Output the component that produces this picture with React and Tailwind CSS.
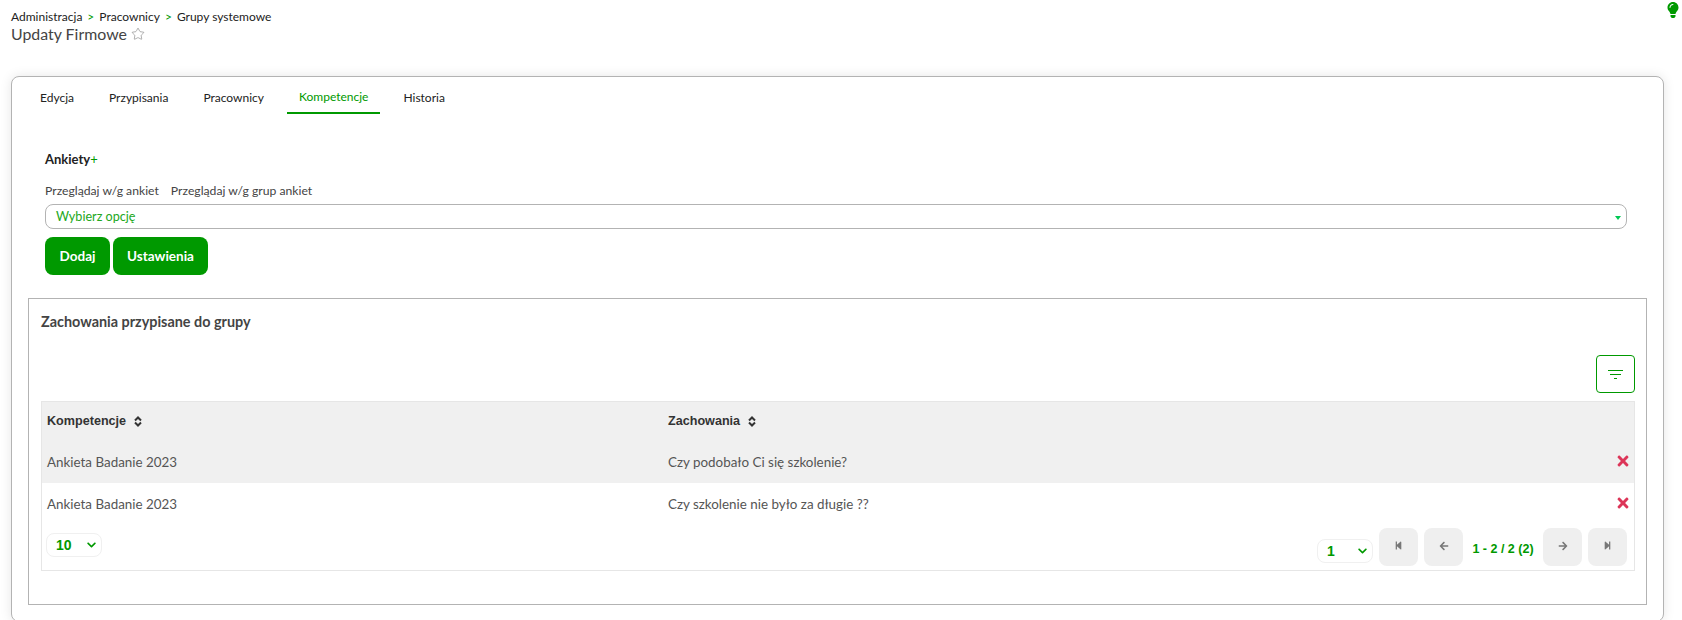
import { Star } from "lucide-react";
import {
  FaLightbulb,
  FaTimes,
  FaStepBackward,
  FaStepForward,
  FaArrowLeft,
  FaArrowRight,
  FaChevronDown,
} from "react-icons/fa";

const TABS = ["Edycja", "Przypisania", "Pracownicy", "Kompetencje", "Historia"];

const ROWS = [
  { name: "Ankieta Badanie 2023", question: "Czy podobało Ci się szkolenie?", shaded: true },
  { name: "Ankieta Badanie 2023", question: "Czy szkolenie nie było za długie ??", shaded: false },
];

function SortIcon() {
  return (
    <svg viewBox="0 0 8 11" className="ml-2 h-[11px] w-2 text-[#333]" fill="none" stroke="currentColor" strokeWidth="2">
      <path d="M1 4.5 L4 1.5 L7 4.5" />
      <path d="M1 6.5 L4 9.5 L7 6.5" />
    </svg>
  );
}

function FilterIcon() {
  return (
    <svg viewBox="0 0 15 9" className="h-[9px] w-[15px]" stroke="currentColor" strokeWidth="1">
      <path d="M0 0.5 H15" />
      <path d="M2 4.5 H13" />
      <path d="M6 8.5 H9" />
    </svg>
  );
}

function PageButton({ children }) {
  return (
    <button className="flex h-[38px] w-[39px] items-start justify-center rounded-lg bg-[#efefef] pt-[13px] text-[#777]">
      {children}
    </button>
  );
}

function SmallSelect({ value }) {
  return (
    <div className="flex h-6 w-[56px] items-center justify-between rounded-lg border border-[#f0f0f0] bg-white pl-[9px] pr-[4px] font-['Liberation_Sans',sans-serif] text-sm font-bold text-[#009900]">
      {value}
      <FaChevronDown className="h-[10px] w-[11px]" />
    </div>
  );
}

export default function App() {
  return (
    <div className="h-[620px] overflow-hidden bg-white font-['Lato',sans-serif] text-[#222]">
      <div className="relative px-[11px] pt-[8px]">
        <div className="flex h-[17px] items-center text-xs">
          <span>Administracja</span>
          <span className="mx-[5px] text-[#009900]">&gt;</span>
          <span>Pracownicy</span>
          <span className="mx-[5px] text-[#009900]">&gt;</span>
          <span>Grupy systemowe</span>
        </div>
        <div className="flex h-[18px] items-center text-[15.9px] text-[#444]">
          Updaty Firmowe
          <Star className="ml-1 h-[14px] w-[14px] text-[#777]" strokeWidth={1} />
        </div>
        <FaLightbulb className="absolute right-px top-[2px] h-4 w-4 text-[#009900]" />
      </div>

      <div className="ml-[11px] mr-[18px] mt-[33px] h-[546px] rounded-lg border border-[#b3b3b3] bg-white px-[16px] shadow-[0_0_12px_rgba(0,0,0,0.1)]">
        <div className="flex h-[37px] items-stretch">
          {TABS.map((tab) => (
            <div
              key={tab}
              className={
                tab === "Kompetencje"
                  ? "mr-[11px] flex items-center border-b-2 border-[#009900] px-[12px] pt-[4px] text-xs text-[#009900]"
                  : "mr-[11px] flex items-center px-[12px] pt-[4px] text-xs"
              }
            >
              {tab}
            </div>
          ))}
        </div>

        <div className="pl-[17px] pr-[20px]">
          <div className="mt-[35px] text-[13px] font-bold leading-5">
            Ankiety<span className="font-normal text-[#009900]">+</span>
          </div>
          <div className="mt-[14px] flex h-[17px] items-center gap-[12px] text-[12.2px] text-[#444]">
            <span>Przeglądaj w/g ankiet</span>
            <span>Przeglądaj w/g grup ankiet</span>
          </div>
          <div className="mt-[4px] flex h-[25px] items-center justify-between rounded-lg border border-[#b3b3b3] pl-[10px] pr-[5px] pt-[2px] text-[12.6px] text-[#22a822]">
            Wybierz opcję
            <span className="h-0 w-0 border-x-[3px] border-t-[4px] border-x-transparent border-t-[#00c853]" />
          </div>
          <div className="mt-[8px] flex gap-[3px]">
            <button className="h-[38px] w-[65px] rounded-lg bg-[#009900] text-[13.5px] font-bold text-white">
              Dodaj
            </button>
            <button className="h-[38px] w-[95px] rounded-lg bg-[#009900] text-[13.5px] font-bold text-white">
              Ustawienia
            </button>
          </div>
        </div>

        <div className="mt-[23px] h-[307px] border border-[#b3b3b3] pl-[12px] pr-[11px]">
          <div className="mt-[13px] text-[14.4px] font-bold leading-5 text-[#444]">
            Zachowania przypisane do grupy
          </div>
          <div className="mt-[23px] flex justify-end">
            <button className="flex h-[38px] w-[39px] items-center justify-center rounded border border-[#009900] text-[#009900]">
              <FilterIcon />
            </button>
          </div>

          <div className="mt-[8px] h-[170px] border border-[#e6e6e6]">
            <div className="flex h-[39px] items-center bg-[#f0f0f0] font-['Liberation_Sans',sans-serif] text-[12.6px] font-bold text-[#333]">
              <div className="flex w-[621px] items-center pl-[5px]">
                Kompetencje
                <SortIcon />
              </div>
              <div className="flex items-center pl-[5px]">
                Zachowania
                <SortIcon />
              </div>
            </div>
            {ROWS.map((row) => (
              <div
                key={row.question}
                className={
                  row.shaded
                    ? "flex h-[42px] items-center bg-[#f0f0f0] text-[13.4px] text-[#555]"
                    : "flex h-[42px] items-center bg-white text-[13.4px] text-[#555]"
                }
              >
                <div className="w-[621px] pl-[5px]">{row.name}</div>
                <div className="flex-1 pl-[5px]">{row.question}</div>
                <FaTimes className="mr-[3px] -mt-[3px] h-4 w-4 text-[#dc3558]" />
              </div>
            ))}
            <div className="flex items-start justify-between pl-[4px] pr-[7px]">
              <div className="mt-[8px]">
                <SmallSelect value="10" />
              </div>
              <div className="mt-[3px] flex items-start">
                <div className="mr-[6px] mt-[11px]">
                  <SmallSelect value="1" />
                </div>
                <div className="flex gap-[6px]">
                  <PageButton>
                    <FaStepBackward className="h-[9px] w-[9px]" />
                  </PageButton>
                  <PageButton>
                    <FaArrowLeft className="h-[10px] w-[10px]" />
                  </PageButton>
                </div>
                <div className="mx-[8px] mt-[12px] w-[64px] whitespace-nowrap text-center font-['Liberation_Sans',sans-serif] text-[12.5px] font-bold text-[#009900]">
                  1 - 2 / 2 (2)
                </div>
                <div className="flex gap-[6px]">
                  <PageButton>
                    <FaArrowRight className="h-[10px] w-[10px]" />
                  </PageButton>
                  <PageButton>
                    <FaStepForward className="h-[9px] w-[9px]" />
                  </PageButton>
                </div>
              </div>
            </div>
          </div>
        </div>
      </div>
    </div>
  );
}
